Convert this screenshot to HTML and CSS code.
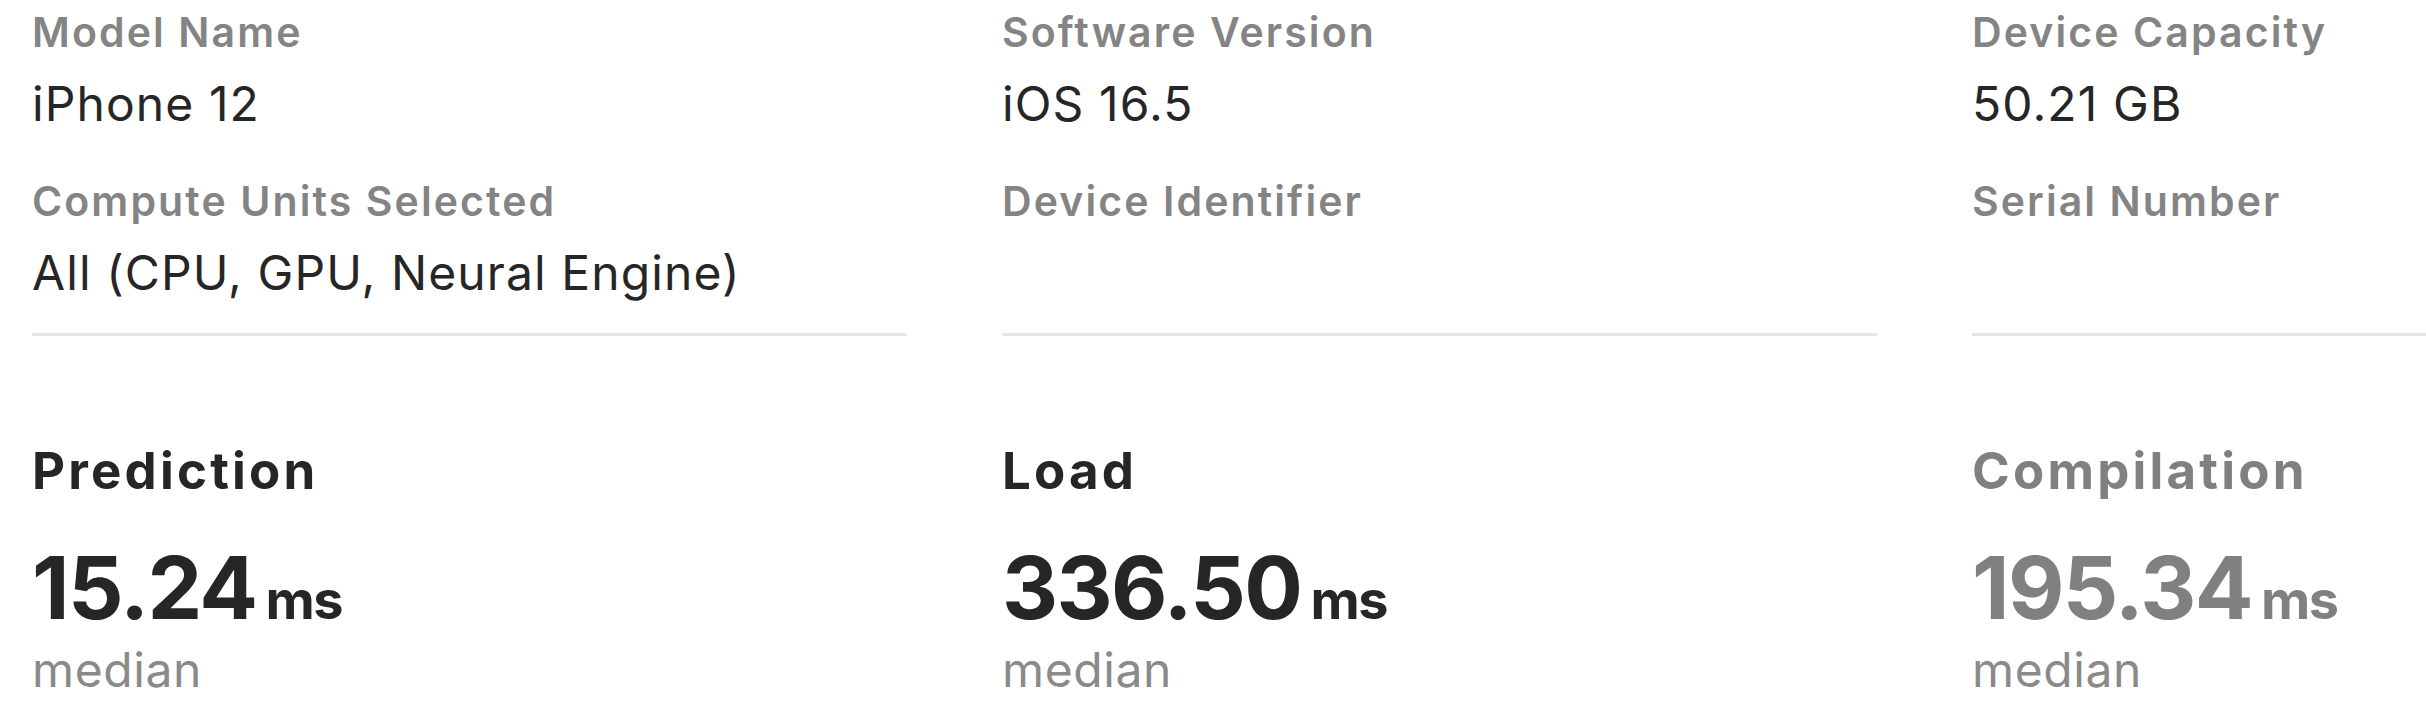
FILE: index.html
```html
<!DOCTYPE html>
<html lang="en">
<head>
<meta charset="utf-8">
<title>Performance Report</title>
<link rel="stylesheet" href="styles.css">
</head>
<body>
<main class="report">
  <section class="column">
    <div class="info">
      <div class="field">
        <div class="label">Model Name</div>
        <div class="value">iPhone 12</div>
      </div>
      <div class="field">
        <div class="label">Compute Units Selected</div>
        <div class="value">All (CPU, GPU, Neural Engine)</div>
      </div>
    </div>
    <hr class="divider">
    <div class="metric">
      <div class="metric-title">Prediction</div>
      <div class="metric-value"><span class="num">15.24</span><span class="unit">ms</span></div>
      <div class="metric-sub">median</div>
    </div>
  </section>
  <section class="column">
    <div class="info">
      <div class="field">
        <div class="label">Software Version</div>
        <div class="value">iOS 16.5</div>
      </div>
      <div class="field">
        <div class="label">Device Identifier</div>
        <div class="value"></div>
      </div>
    </div>
    <hr class="divider">
    <div class="metric">
      <div class="metric-title">Load</div>
      <div class="metric-value"><span class="num">336.50</span><span class="unit">ms</span></div>
      <div class="metric-sub">median</div>
    </div>
  </section>
  <section class="column">
    <div class="info">
      <div class="field">
        <div class="label">Device Capacity</div>
        <div class="value">50.21 GB</div>
      </div>
      <div class="field">
        <div class="label">Serial Number</div>
        <div class="value"></div>
      </div>
    </div>
    <hr class="divider">
    <div class="metric metric--muted">
      <div class="metric-title">Compilation</div>
      <div class="metric-value"><span class="num">195.34</span><span class="unit">ms</span></div>
      <div class="metric-sub">median</div>
    </div>
  </section>
</main>
</body>
</html>
```
FILE: styles.css
```css
html, body {
  margin: 0;
  padding: 0;
  background: #ffffff;
  overflow: hidden;
}

body {
  font-family: Inter, "Noto Sans", "Liberation Sans", sans-serif;
  color: #262626;
}

.report {
  display: grid;
  grid-template-columns: repeat(3, 875px);
  column-gap: 95px;
  padding-left: 32px;
  padding-top: 7px;
}

.column {
  display: flex;
  flex-direction: column;
}

.info {
  display: flex;
  flex-direction: column;
  gap: 44px;
}

.field {
  display: flex;
  flex-direction: column;
  gap: 19px;
}

.label {
  font-size: 41px;
  line-height: 50px;
  font-weight: 600;
  letter-spacing: 2.1px;
  color: #848484;
}

.value {
  font-size: 48px;
  line-height: 56px;
  height: 56px;
  font-weight: 400;
  letter-spacing: 1.1px;
  color: #262626;
}

.divider {
  border: 0;
  height: 3px;
  background: #e6e6e6;
  margin: 32px 0 0 0;
}

.metric {
  display: flex;
  flex-direction: column;
  margin-top: 105px;
}

.metric-title {
  font-size: 51px;
  line-height: 60px;
  font-weight: 700;
  letter-spacing: 3.2px;
  color: #262626;
}

.metric-value {
  display: flex;
  align-items: baseline;
  gap: 9px;
  margin-top: 37px;
  height: 100px;
}

.num {
  font-size: 87px;
  line-height: 100px;
  font-weight: 700;
  letter-spacing: -1.6px;
  color: #262626;
}

.unit {
  font-size: 54px;
  line-height: 1;
  font-weight: 700;
  letter-spacing: -1.5px;
  color: #262626;
}

.metric-sub {
  margin-top: 4px;
  font-size: 48px;
  line-height: 56px;
  font-weight: 400;
  letter-spacing: 0.6px;
  color: #8a8a8a;
}

.metric--muted .metric-title,
.metric--muted .num,
.metric--muted .unit {
  color: #808080;
}
```
